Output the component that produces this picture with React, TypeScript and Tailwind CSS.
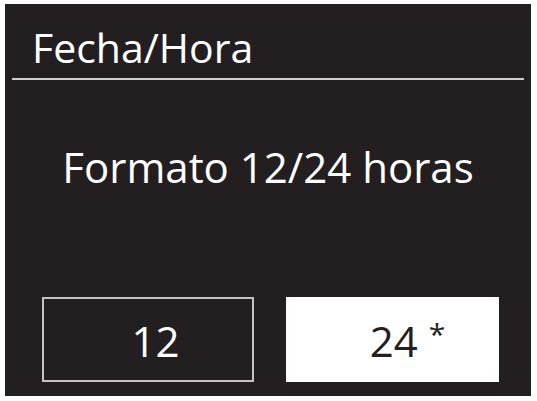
export default function App() {
  return (
    <div className="min-h-[401px] w-[537px] bg-white pl-[5px] pt-[4px] font-['Open_Sans',sans-serif]">
      <div className="flex h-[392px] w-[526px] flex-col bg-[#231f20] text-white">
        <h1 className="pl-[27px] pt-[23px] text-[41px] leading-none font-normal">Fecha/Hora</h1>
        <div className="mx-[7px] mt-[10px] h-[2px] bg-[#cfcfcf]" />
        <p className="mt-[66px] text-center text-[42px] leading-none">Formato 12/24 horas</p>
        <div className="mt-[109px] flex gap-[32px] pl-[37px]">
          <div className="flex h-[85px] w-[212px] items-center justify-center border-2 border-[#c4c4c4] pl-[15px] pt-[2px] text-[42px] leading-none">
            12
          </div>
          <div className="flex h-[85px] w-[213px] items-center justify-center bg-white pl-[30px] pt-[2px] text-[42px] leading-none text-[#231f20]">
            <span>
              24 <span className="align-[0.4em] text-[30px]">*</span>
            </span>
          </div>
        </div>
      </div>
    </div>
  );
}
